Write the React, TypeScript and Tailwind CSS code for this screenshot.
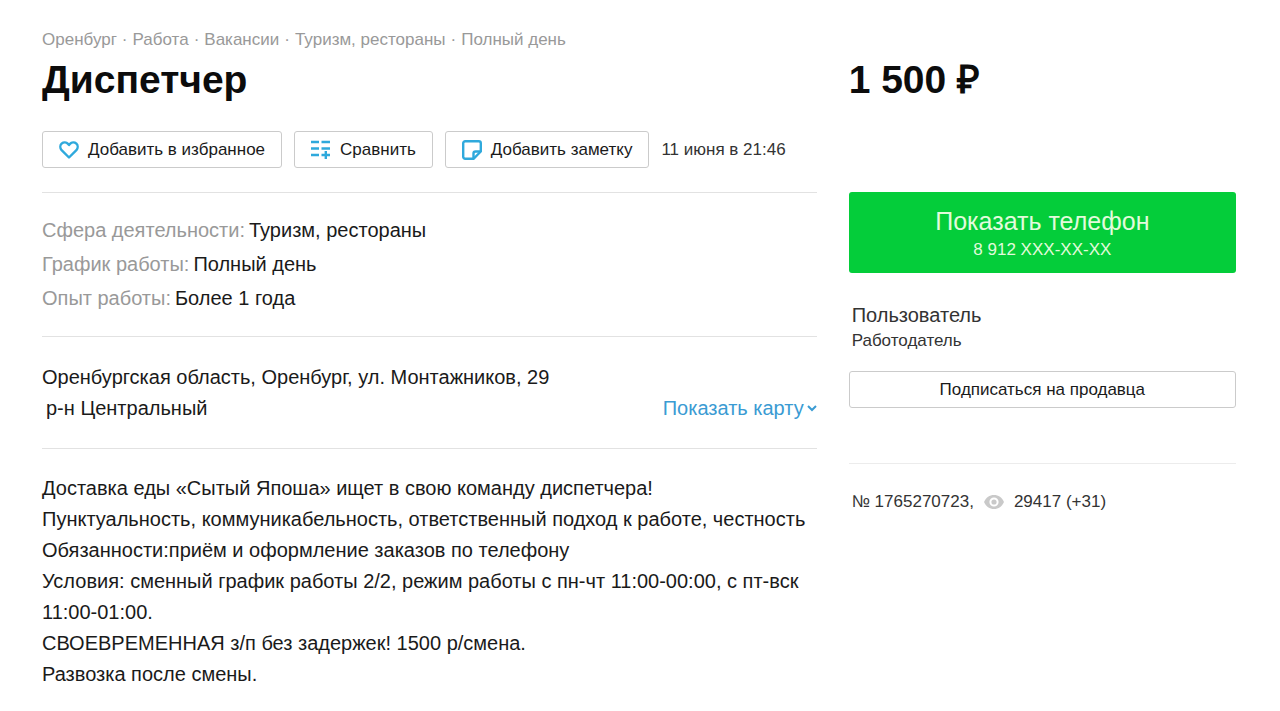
import { ReactNode } from 'react'

const breadcrumbs = ['Оренбург', 'Работа', 'Вакансии', 'Туризм, рестораны', 'Полный день']

const params = [
  { label: 'Сфера деятельности', value: 'Туризм, рестораны' },
  { label: 'График работы', value: 'Полный день' },
  { label: 'Опыт работы', value: 'Более 1 года' }
]

const description = [
  'Доставка еды «Сытый Япоша» ищет в свою команду диспетчера!',
  'Пунктуальность, коммуникабельность, ответственный подход к работе, честность',
  'Обязанности:приём и оформление заказов по телефону',
  'Условия: сменный график работы 2/2, режим работы с пн-чт 11:00-00:00, с пт-вск 11:00-01:00.',
  'СВОЕВРЕМЕННАЯ з/п без задержек! 1500 р/смена.',
  'Развозка после смены.'
]

function HeartIcon() {
  return (
    <svg width="20" height="18" viewBox="0 0 20 18" fill="none" stroke="#2fa9dc" strokeWidth="2.4" strokeLinejoin="round">
      <path d="M10 16.5 2.6 9.2C.9 7.2.9 4.4 2.6 2.700 4.500 1 7.400 1.200 9 2.900l1 1.100 1-1.100c1.600-1.700 4.500-1.900 6.400-.2 1.700 1.700 1.700 4.500 0 6.500L10 16.500Z" />
    </svg>
  )
}

function CompareIcon() {
  return (
    <svg width="20" height="20" viewBox="0 0 20 20" fill="none" stroke="#2fa9dc" strokeWidth="2.4">
      <path d="M0 2h8M10.500 2H19M0 8.500h8M10.500 8.500H19M0 15h8M10.500 15H19M14.800 11v8" />
    </svg>
  )
}

function NoteIcon() {
  return (
    <svg width="20" height="20" viewBox="0 0 20 20" fill="none" stroke="#2fa9dc" strokeWidth="2.4" strokeLinejoin="round">
      <path d="M3.200 1.200h13.600a2 2 0 0 1 2 2v8.300l-7.300 7.300H3.200a2 2 0 0 1-2-2V3.200a2 2 0 0 1 2-2Z" />
      <path d="M18.800 11.500h-5.300a2 2 0 0 0-2 2v5.300" />
    </svg>
  )
}

function EyeIcon() {
  return (
    <svg width="20" height="14" viewBox="0 0 20 14">
      <path fill="#c9c9c9" d="M10 0C5.500 0 2 2.600 0 7c2 4.400 5.500 7 10 7s8-2.600 10-7c-2-4.400-5.500-7-10-7Z" />
      <circle cx="10" cy="7" r="3.600" fill="none" stroke="#fff" strokeWidth="2" />
    </svg>
  )
}

function ActionButton({ icon, children }: { icon: ReactNode; children: ReactNode }) {
  return (
    <button
      type="button"
      className="flex h-[37px] cursor-pointer items-center gap-[9px] rounded-[3px] border border-[#cbcbcb] bg-white px-4 hover:border-gray-400"
    >
      {icon}
      {children}
    </button>
  )
}

export default function App() {
  return (
    <div className="grid grid-cols-[2fr_1fr] gap-x-8 bg-white pt-7 pr-11 pb-6 pl-[42px] font-['Liberation_Sans',Arial,sans-serif] text-[17px] leading-6 text-[#1a1a1a]">
      <header>
        <nav className="flex flex-wrap gap-x-[5px] text-[#999]">
          {breadcrumbs.map((item, index) => (
            <span key={item} className="flex gap-x-[5px]">
              {index > 0 && <span>·</span>}
              <a href="#" className="hover:underline">
                {item}
              </a>
            </span>
          ))}
        </nav>
        <h1 className="text-[39px] leading-[55px] font-bold text-[#0c0c0c]">Диспетчер</h1>
        <div className="mt-6 flex items-center gap-3">
          <ActionButton icon={<HeartIcon />}>Добавить в избранное</ActionButton>
          <ActionButton icon={<CompareIcon />}>Сравнить</ActionButton>
          <ActionButton icon={<NoteIcon />}>Добавить заметку</ActionButton>
          <time className="text-[#333]">11 июня в 21:46</time>
        </div>
      </header>

      <div className="mt-6 text-[39px] leading-[55px] font-bold text-[#0c0c0c]">1 500 ₽</div>

      <main className="mt-6 text-[20px] leading-[31px]">
        <dl className="border-t border-[#e2e2e2] pt-5 pb-[21px] leading-[34px]">
          {params.map((param) => (
            <div key={param.label} className="flex gap-x-1">
              <dt className="text-[#999]">{param.label}:</dt>
              <dd>{param.value}</dd>
            </div>
          ))}
        </dl>

        <section className="flex items-end justify-between border-t border-[#e2e2e2] pt-[25px] pb-6">
          <address className="not-italic">
            <p>Оренбургская область, Оренбург, ул. Монтажников, 29</p>
            <p className="pl-1">р-н Центральный</p>
          </address>
          <button type="button" className="flex cursor-pointer items-center gap-[3px] text-[#3a9bd3]">
            Показать карту
            <svg width="10" height="7" viewBox="0 0 10 7" fill="none" stroke="currentColor" strokeWidth="2">
              <path d="m1 1 4 4 4-4" />
            </svg>
          </button>
        </section>

        <section className="border-t border-[#e2e2e2] pt-6">
          {description.map((line) => (
            <p key={line}>{line}</p>
          ))}
        </section>
      </main>

      <aside className="mt-6">
        <button
          type="button"
          className="flex w-full cursor-pointer flex-col items-center rounded-[3px] bg-[#04cd3a] pt-3 pb-[11px] text-[#e2fbdc] hover:bg-[#04bd36]"
        >
          <span className="text-[25px] leading-[34px]">Показать телефон</span>
          <span>8 912 XXX-XX-XX</span>
        </button>

        <div className="mt-7 px-[3px] text-[#333]">
          <p className="text-[20px] leading-7">Пользователь</p>
          <p>Работодатель</p>
        </div>

        <button
          type="button"
          className="mt-[18px] h-[37px] w-full cursor-pointer rounded-[3px] border border-[#cbcbcb] bg-white hover:border-gray-400"
        >
          Подписаться на продавца
        </button>

        <div className="mt-[55px] flex items-center gap-[10px] border-t border-[#ececec] px-[3px] pt-[26px] text-[#333]">
          <span>№ 1765270723,</span>
          <EyeIcon />
          <span>29417 (+31)</span>
        </div>
      </aside>
    </div>
  )
}
